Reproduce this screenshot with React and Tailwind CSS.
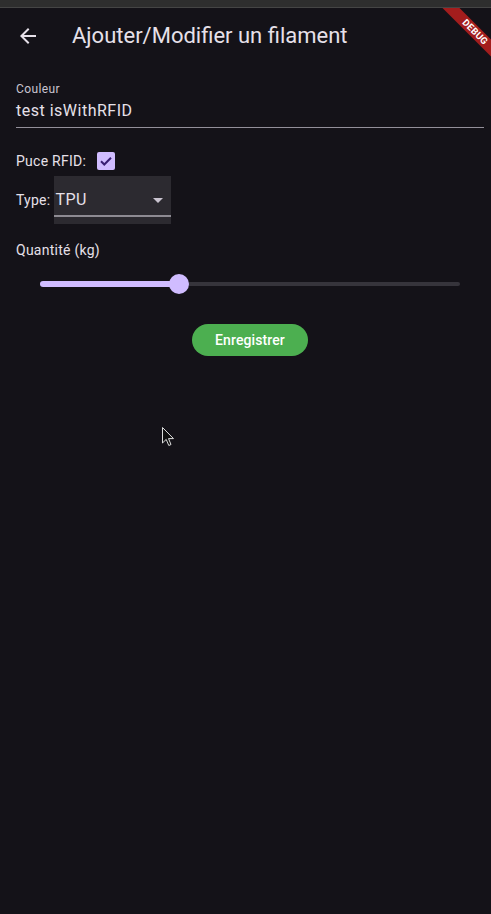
import React from "react";

export default function App() {
  return (
    <div className="relative w-[491px] min-h-[914px] overflow-hidden bg-[#141218] font-['Roboto',sans-serif]">
      <div className="h-[8px] bg-[#2e2e2e] border-b border-[#454545]" />
      <div className="w-[500px]">
        <header className="h-[56px] flex items-center">
          <div className="w-[56px] flex justify-center">
            <svg width="24" height="24" viewBox="0 0 24 24">
              <path d="M20 11H7.83l5.59-5.59L12 4l-8 8 8 8 1.41-1.41L7.83 13H20v-2z" fill="#e6e0e9" />
            </svg>
          </div>
          <h1 className="ml-[16px] text-[22px] leading-[28px] text-[#e6e0e9]">Ajouter/Modifier un filament</h1>
        </header>
        <main className="px-4">
          <div className="mt-[17px]">
            <div className="text-[12px] leading-[16px] tracking-[0.4px] text-[#cac4d0]">Couleur</div>
            <div className="mt-[2px] text-[16px] leading-[24px] tracking-[0.5px] text-[#e6e0e9]">test isWithRFID</div>
            <div className="mt-[4px] h-[1px] bg-[#938f99]" />
          </div>
          <div className="mt-[24px] flex items-center h-[18px]">
            <span className="text-[14px] tracking-[0.25px] text-[#e6e0e9]">Puce RFID:</span>
            <div className="ml-[11px] w-[18px] h-[18px] rounded-[2px] bg-[#d0bcff] flex items-center justify-center">
              <svg width="18" height="18" viewBox="0 0 18 18">
                <path d="M4 9.2l3.3 3.3L14 5.8" fill="none" stroke="#381e72" strokeWidth="2" />
              </svg>
            </div>
          </div>
          <div className="mt-[6px] flex items-center">
            <span className="text-[14px] tracking-[0.25px] text-[#e6e0e9]">Type:</span>
            <div className="ml-[4px] w-[117px] h-[48px] bg-[#2c2a30] flex flex-col">
              <div className="flex items-center h-[39px] pt-[9px]">
                <span className="ml-[1px] text-[16px] leading-[24px] tracking-[0.5px] text-[#e6e0e9]">TPU</span>
                <svg className="ml-auto mr-[8px]" width="10" height="5" viewBox="0 0 10 5">
                  <path d="M0 0h10L5 5z" fill="#cac4d0" />
                </svg>
              </div>
              <div className="h-[2px] bg-[#8e8b93]" />
            </div>
          </div>
          <div className="mt-[16px] text-[14px] leading-[20px] tracking-[0.25px] text-[#e6e0e9]">Quantité (kg)</div>
          <div className="mt-[14px] px-[24px] h-[20px] flex items-center">
            <div className="relative w-full h-[6px]">
              <div className="absolute inset-y-[1px] left-0 right-0 rounded-full bg-[#36343b]" />
              <div className="absolute inset-y-0 left-0 w-[33%] rounded-full bg-[#d0bcff]" />
              <div className="absolute left-[33%] top-1/2 -translate-x-1/2 -translate-y-1/2 w-[20px] h-[20px] rounded-full bg-[#d0bcff]" />
            </div>
          </div>
          <div className="mt-[30px] flex justify-center">
            <button className="w-[116px] h-[32px] rounded-full bg-[#4caf50] text-white text-[14px] tracking-[0.1px] font-medium">Enregistrer</button>
          </div>
        </main>
      </div>
      <div className="absolute top-[8px] right-0 w-[60px] h-[60px] overflow-hidden pointer-events-none">
        <div className="absolute left-[-6px] top-[18px] w-[100px] h-[12px] rotate-45 bg-[#a31d1d] flex items-center justify-center">
          <span className="text-[9.5px] font-bold text-white leading-none tracking-[0.2px]">DEBUG</span>
        </div>
      </div>
      <svg className="absolute left-[162px] top-[427px]" width="13" height="20" viewBox="0 0 13 20">
        <path d="M0.5 0.5V16L4.2 12.4L6.8 18.5L9 17.5L6.5 11.6H11.5Z" fill="#111" stroke="#ddd" strokeWidth="1" />
      </svg>
    </div>
  );
}
